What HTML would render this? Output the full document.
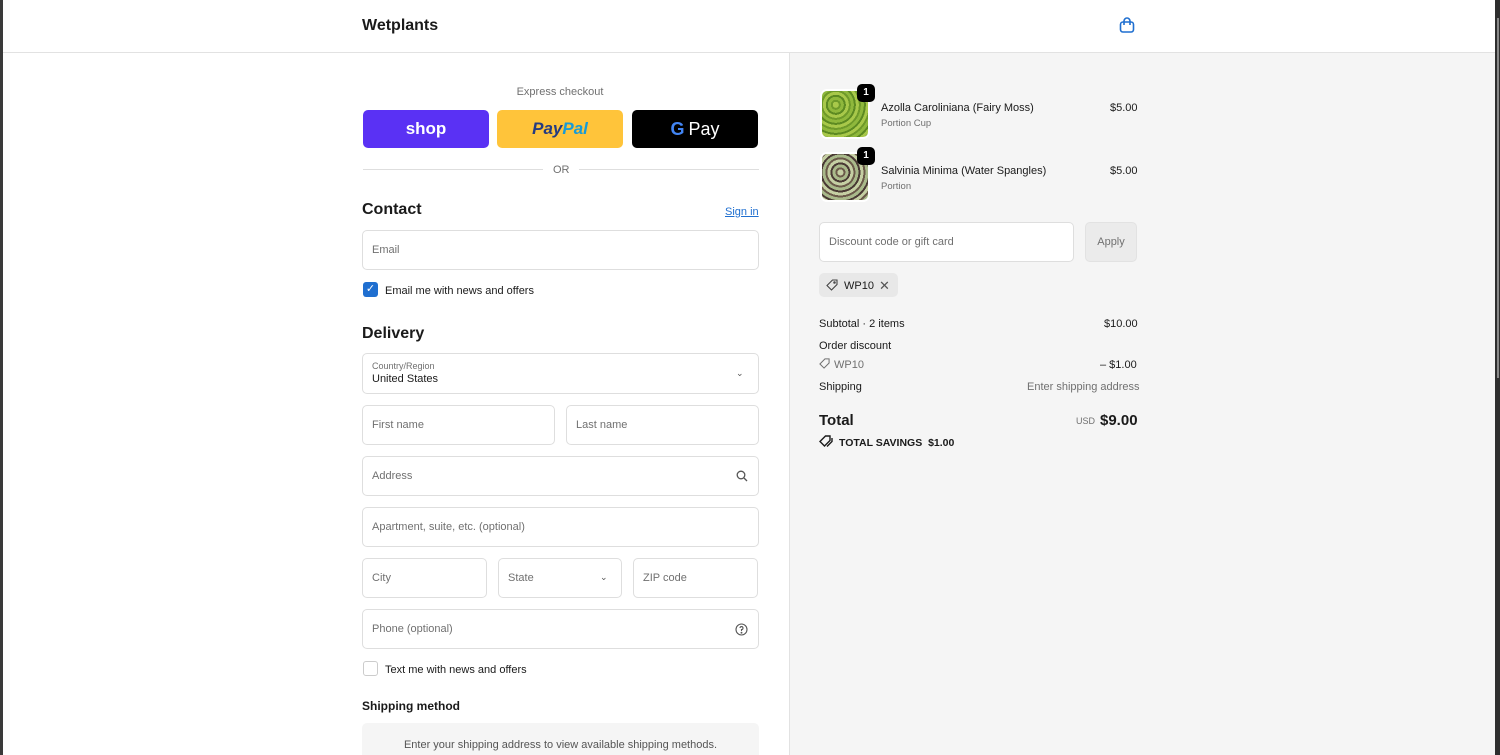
<!DOCTYPE html>
<html><head><meta charset="utf-8"><style>
*{box-sizing:border-box;margin:0;padding:0}
html,body{width:1500px;height:755px;overflow:hidden}
body{background:#fff;font-family:"Liberation Sans",sans-serif;color:#1a1a1a;position:relative;font-size:11px}
.a{position:absolute}
.inp{position:absolute;border:1px solid #dedede;border-radius:5px;background:#fff;color:#707070;font-size:11px;padding-left:9px;display:flex;align-items:center}
.r{position:absolute;font-size:11px}
#w{position:absolute;left:0;top:1px;width:1500px;height:755px}
</style></head><body>
<div class="a" style="left:789px;top:53px;width:706px;height:702px;background:#f5f5f5;border-left:1px solid #e2e2e2"></div>
<div class="a" style="left:3px;top:52px;width:1492px;height:1px;background:#e2e2e2"></div>
<div id="w">
<div class="a" style="left:362px;top:16px;font-size:16px;font-weight:bold">Wetplants</div>
<svg class="a" style="left:1118px;top:15px" width="18" height="18" viewBox="0 0 18 18" fill="none" stroke="#1f6fd0" stroke-width="1.6"><rect x="2.5" y="6" width="13" height="10" rx="2.5"/><path d="M6 9V5a3 3 0 0 1 6 0v4"/></svg>

<div class="a" style="left:362px;top:85px;width:396px;text-align:center;color:#707070;font-size:11px">Express checkout</div>
<div class="a" style="left:363px;top:109px;width:126px;height:38px;background:#5a31f4;border-radius:5px;color:#fff;font-weight:bold;font-size:17px;display:flex;align-items:center;justify-content:center">shop</div>
<div class="a" style="left:497px;top:109px;width:126px;height:38px;background:#ffc43a;border-radius:5px;font-weight:bold;font-style:italic;font-size:17px;display:flex;align-items:center;justify-content:center"><span style="color:#253b80">Pay</span><span style="color:#179bd7">Pal</span></div>
<div class="a" style="left:632px;top:109px;width:126px;height:38px;background:#000;border-radius:5px;color:#fff;font-size:18px;display:flex;align-items:center;justify-content:center"><b style="color:#4285f4;margin-right:4px">G</b>Pay</div>
<div class="a" style="left:363px;top:168px;width:180px;height:1px;background:#dedede"></div>
<div class="a" style="left:579px;top:168px;width:180px;height:1px;background:#dedede"></div>
<div class="a" style="left:553px;top:163px;color:#707070">OR</div>

<div class="a" style="left:362px;top:200px;font-size:16px;font-weight:bold">Contact</div>
<div class="a" style="left:725px;top:205px;color:#1f6fd0;text-decoration:underline">Sign in</div>
<div class="inp" style="left:362px;top:229px;width:397px;height:40px">Email</div>
<div class="a" style="left:363px;top:281px;width:15px;height:15px;background:#1f6fd0;border-radius:3px;color:#fff;font-size:11px;text-align:center;line-height:15px">✓</div>
<div class="r" style="left:385px;top:284px">Email me with news and offers</div>

<div class="a" style="left:362px;top:324px;font-size:16px;font-weight:bold">Delivery</div>
<div class="inp" style="left:362px;top:352px;width:397px;height:41px;display:block;padding-top:7px"><div style="font-size:9px;color:#707070">Country/Region</div><div style="color:#1a1a1a;font-size:11px;margin-top:2px">United States</div></div>
<div class="a" style="left:736px;top:367px;font-size:9px;color:#555">⌄</div>
<div class="inp" style="left:362px;top:404px;width:193px;height:40px">First name</div>
<div class="inp" style="left:566px;top:404px;width:193px;height:40px">Last name</div>
<div class="inp" style="left:362px;top:455px;width:397px;height:40px">Address</div>
<svg class="a" style="left:736px;top:469px" width="12" height="12" viewBox="0 0 12 12" fill="none" stroke="#555" stroke-width="1.3"><circle cx="5" cy="5" r="3.8"/><path d="M8 8l3 3"/></svg>
<div class="inp" style="left:362px;top:506px;width:397px;height:40px">Apartment, suite, etc. (optional)</div>
<div class="inp" style="left:362px;top:557px;width:125px;height:40px">City</div>
<div class="inp" style="left:498px;top:557px;width:124px;height:40px">State</div>
<div class="a" style="left:600px;top:571px;font-size:9px;color:#555">⌄</div>
<div class="inp" style="left:633px;top:557px;width:125px;height:40px">ZIP code</div>
<div class="inp" style="left:362px;top:608px;width:397px;height:40px">Phone (optional)</div>
<svg class="a" style="left:735px;top:622px" width="13" height="13" viewBox="0 0 13 13" fill="none" stroke="#555" stroke-width="1.1"><circle cx="6.5" cy="6.5" r="5.5"/><path d="M5 5a1.5 1.5 0 1 1 1.5 1.6V8"/><circle cx="6.5" cy="9.7" r=".4" fill="#555"/></svg>
<div class="a" style="left:363px;top:660px;width:15px;height:15px;border:1px solid #ccc;border-radius:3px;background:#fff"></div>
<div class="r" style="left:385px;top:663px">Text me with news and offers</div>
<div class="a" style="left:362px;top:698px;font-size:12px;font-weight:bold">Shipping method</div>
<div class="a" style="left:362px;top:722px;width:397px;height:40px;background:#f5f5f5;border-radius:5px;color:#555;text-align:center;padding-top:16px">Enter your shipping address to view available shipping methods.</div>

<div class="a" style="left:820px;top:88px;width:50px;height:50px;border-radius:7px;border:2px solid #fff;background:repeating-radial-gradient(circle at 30% 30%,#a8c84a 0 3px,#6f9a2a 3px 5px,#8fb83c 5px 8px,#5d8a22 8px 10px);"></div>
<div class="a" style="left:857px;top:83px;width:18px;height:18px;background:#000;color:#fff;border-radius:5px;font-size:10px;font-weight:bold;text-align:center;line-height:18px">1</div>
<div class="r" style="left:881px;top:101px">Azolla Caroliniana (Fairy Moss)</div>
<div class="r" style="left:881px;top:117px;color:#707070;font-size:9.5px">Portion Cup</div>
<div class="r" style="left:1110px;top:101px">$5.00</div>
<div class="a" style="left:820px;top:151px;width:50px;height:50px;border-radius:7px;border:2px solid #fff;background:repeating-radial-gradient(circle at 40% 40%,#c5cfa3 0 3px,#6b5a4a 3px 5px,#a9b98a 5px 8px,#4a3a35 8px 10px);"></div>
<div class="a" style="left:857px;top:146px;width:18px;height:18px;background:#000;color:#fff;border-radius:5px;font-size:10px;font-weight:bold;text-align:center;line-height:18px">1</div>
<div class="r" style="left:881px;top:164px">Salvinia Minima (Water Spangles)</div>
<div class="r" style="left:881px;top:180px;color:#707070;font-size:9.5px">Portion</div>
<div class="r" style="left:1110px;top:164px">$5.00</div>

<div class="inp" style="left:819px;top:221px;width:255px;height:40px">Discount code or gift card</div>
<div class="a" style="left:1085px;top:221px;width:52px;height:40px;border:1px solid #e2e2e2;border-radius:5px;background:#ebebeb;color:#707070;text-align:center;line-height:38px">Apply</div>
<div class="a" style="left:819px;top:272px;width:79px;height:24px;background:#e8e8e8;border-radius:5px"></div>
<svg class="a" style="left:826px;top:278px" width="12" height="12" viewBox="0 0 12 12" fill="none" stroke="#444" stroke-width="1.1"><path d="M1 6.5 6.5 1H11v4.5L5.5 11z"/><circle cx="8.5" cy="3.5" r=".7"/></svg>
<div class="r" style="left:844px;top:279px">WP10</div>
<div class="r" style="left:879px;top:277px;font-size:13px;color:#555">✕</div>

<div class="r" style="left:819px;top:317px">Subtotal · 2 items</div>
<div class="r" style="left:1104px;top:317px">$10.00</div>
<div class="r" style="left:819px;top:339px">Order discount</div>
<svg class="a" style="left:819px;top:357px" width="11" height="11" viewBox="0 0 12 12" fill="none" stroke="#707070" stroke-width="1.1"><path d="M1 6.5 6.5 1H11v4.5L5.5 11z"/></svg>
<div class="r" style="left:834px;top:358px;color:#707070">WP10</div>
<div class="r" style="left:1100px;top:358px">– $1.00</div>
<div class="r" style="left:819px;top:380px">Shipping</div>
<div class="r" style="left:1027px;top:380px;color:#707070">Enter shipping address</div>
<div class="a" style="left:819px;top:411px;font-size:15px;font-weight:bold">Total</div>
<div class="r" style="left:1076px;top:415px;color:#707070;font-size:9px">USD</div>
<div class="a" style="left:1100px;top:411px;font-size:15px;font-weight:bold">$9.00</div>
<svg class="a" style="left:819px;top:433px" width="14" height="14" viewBox="0 0 14 14" fill="none" stroke="#1a1a1a" stroke-width="1.4"><path d="M1 7.5 6.5 2H11v4.5L5.5 12z"/><path d="M13 4v3.5L8 12.5"/></svg>
<div class="r" style="left:839px;top:436px;font-weight:bold;font-size:10.5px">TOTAL SAVINGS&nbsp; $1.00</div>
</div>
<div class="a" style="left:0;top:0;width:3px;height:755px;background:#3a3a3a"></div>
<div class="a" style="right:0;top:0;width:5px;height:755px;background:#2e2e2e"></div>
<div class="a" style="right:1px;top:18px;width:2px;height:360px;background:#888"></div>
</body></html>
